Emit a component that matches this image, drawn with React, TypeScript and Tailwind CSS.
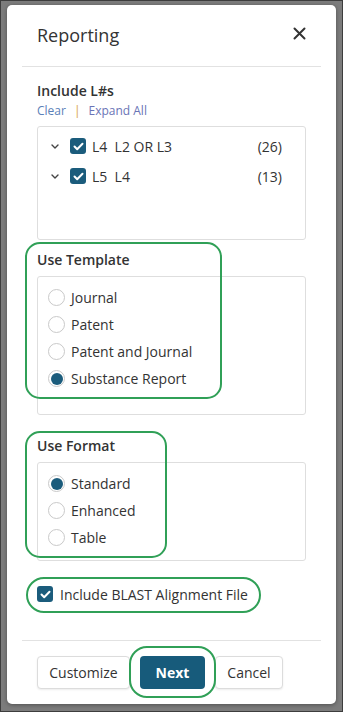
import React from 'react';

const font = { fontFamily: '"Open Sans", "Noto Sans", sans-serif' };

const Check: React.FC<{ className?: string }> = ({ className }) => (
  <span className={`flex h-[16px] w-[16px] items-center justify-center rounded-[3px] bg-[#1b5c7c] ${className ?? ''}`}>
    <svg width="11" height="9" viewBox="0 0 11 9" fill="none">
      <path d="M1.5 4.5L4.2 7.2L9.5 1.8" stroke="white" strokeWidth="2" strokeLinecap="round" strokeLinejoin="round" />
    </svg>
  </span>
);

const Radio: React.FC<{ label: string; checked?: boolean }> = ({ label, checked }) => (
  <div className="flex h-[27px] items-center">
    <span className="flex h-[17px] w-[17px] items-center justify-center rounded-full border border-[#c9c9c9] bg-white">
      {checked && <span className="h-[12px] w-[12px] rounded-full bg-[#1b5c7c]" />}
    </span>
    <span className="ml-[6px] text-[14px] text-[#333]">{label}</span>
  </div>
);

const Chevron = () => (
  <svg width="8" height="5" viewBox="0 0 8 5" fill="none">
    <path d="M1 1L4 4L7 1" stroke="#444" strokeWidth="1.4" strokeLinecap="round" strokeLinejoin="round" />
  </svg>
);

const rows = [
  { label: 'L4  L2 OR L3', count: '(26)' },
  { label: 'L5  L4', count: '(13)' },
];

export default function App() {
  return (
    <div className="h-[712px] w-[343px] overflow-hidden border border-[#3d3d3d] bg-[#7c7c7c] pl-[6px] pt-[4px]" style={font}>
      <div className="relative flex h-[699px] w-[329px] flex-col rounded-[5px] bg-white px-[15px] shadow-[0_1px_4px_rgba(0,0,0,0.35)]">
        {/* header */}
        <div className="flex h-[62px] items-center justify-between border-b border-[#e2e2e2] px-[15px]">
          <span className="text-[18px] text-[#333]">Reporting</span>
          <svg width="13" height="13" viewBox="0 0 13 13" fill="none" className="mt-[-4px]">
            <path d="M1.5 1.5L11.5 11.5M11.5 1.5L1.5 11.5" stroke="#333" strokeWidth="2" strokeLinecap="round" />
          </svg>
        </div>

        <div className="flex flex-col px-[15px]">
          <div className="mt-[14px] text-[14px] font-semibold leading-[20px] text-[#333]">Include L#s</div>
          <div className="mt-[2px] flex items-center text-[12px] leading-[16px]">
            <span className="text-[#5a80b8]">Clear</span>
            <span className="mx-[8px] text-[#d6a43c]">|</span>
            <span className="text-[#6a74b6]">Expand All</span>
          </div>
          <div className="mt-[7px] flex h-[114px] flex-col gap-[6px] rounded-[3px] border border-[#dedede] pt-[7px]">
            {rows.map((r) => (
              <div key={r.label} className="flex h-[24px] items-center pl-[13px] pr-[23px]">
                <Chevron />
                <Check className="ml-[11px]" />
                <span className="ml-[6px] whitespace-pre text-[14px] text-[#333]">{r.label}</span>
                <span className="ml-auto text-[14px] text-[#333]">{r.count}</span>
              </div>
            ))}
          </div>

          <div className="mt-[10px] text-[14px] font-semibold leading-[20px] text-[#333]">Use Template</div>
          <div className="mt-[6px] flex h-[139px] flex-col rounded-[3px] border border-[#dedede] pl-[10px] pt-[7px]">
            <Radio label="Journal" />
            <Radio label="Patent" />
            <Radio label="Patent and Journal" />
            <Radio label="Substance Report" checked />
          </div>

          <div className="mt-[21px] text-[14px] font-semibold leading-[20px] text-[#333]">Use Format</div>
          <div className="mt-[6px] flex h-[99px] flex-col rounded-[3px] border border-[#dedede] pl-[10px] pt-[7px]">
            <Radio label="Standard" checked />
            <Radio label="Enhanced" />
            <Radio label="Table" />
          </div>

          <div className="mt-[23px] flex h-[20px] items-center">
            <Check />
            <span className="ml-[7px] text-[14px] text-[#333]">Include BLAST Alignment File</span>
          </div>
        </div>

        {/* footer */}
        <div className="mt-auto flex gap-[10px] border-t border-[#e2e2e2] px-[15px] pb-[15px] pt-[15px]">
          <button className="h-[33px] w-[93px] rounded-[4px] border border-[#dcdcdc] bg-white text-[14px] text-[#333] shadow-[0_1px_2px_rgba(0,0,0,0.08)]">Customize</button>
          <button className="h-[33px] w-[65px] rounded-[4px] bg-[#175b7b] text-[14px] font-bold text-white">Next</button>
          <button className="h-[33px] w-[68px] rounded-[4px] border border-[#dcdcdc] bg-white text-[14px] text-[#333] shadow-[0_1px_2px_rgba(0,0,0,0.08)]">Cancel</button>
        </div>

        {/* annotation outlines */}
        <div className="pointer-events-none absolute left-[18px] top-[237px] h-[157px] w-[197px] rounded-[15px] border-[2.5px] border-[#30a057]" />
        <div className="pointer-events-none absolute left-[18px] top-[426px] h-[127px] w-[142px] rounded-[15px] border-[2.5px] border-[#30a057]" />
        <div className="pointer-events-none absolute left-[19px] top-[572px] h-[36px] w-[235px] rounded-full border-[2.5px] border-[#30a057]" />
        <div className="pointer-events-none absolute left-[122px] top-[641px] h-[52px] w-[87px] rounded-[18px] border-[2.5px] border-[#30a057]" />
      </div>
    </div>
  );
}
